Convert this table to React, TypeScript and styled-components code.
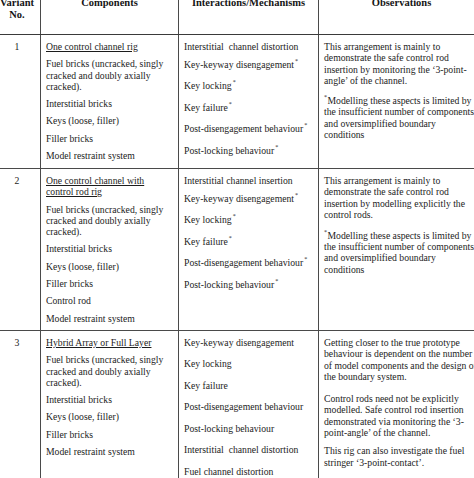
import styled, { createGlobalStyle } from "styled-components";

const GlobalStyle = createGlobalStyle`
  html, body {
    margin: 0;
    padding: 0;
    background: #ffffff;
    overflow: hidden;
  }
  body {
    font-family: "Liberation Serif", "Times New Roman", serif;
    color: #1c1c1c;
  }
`;

type RowData = {
  num: string;
  components: { text: string[]; underline?: boolean }[];
  interactions: { text: string; star?: boolean }[];
  tightFirst?: boolean;
  observations: { lines: string[]; star?: boolean; gap: number }[];
  height?: number;
};

const modelling = [
  "Modelling these aspects is limited by",
  "the insufficient number of components",
  "and oversimplified boundary",
  "conditions",
];

const rows: RowData[] = [
  {
    num: "1",
    height: 133,
    components: [
      { text: ["One control channel rig"], underline: true },
      { text: ["Fuel bricks (uncracked, singly", "cracked and doubly axially", "cracked)."] },
      { text: ["Interstitial bricks"] },
      { text: ["Keys (loose, filler)"] },
      { text: ["Filler bricks"] },
      { text: ["Model restraint system"] },
    ],
    tightFirst: true,
    interactions: [
      { text: "Interstitial\u00a0 channel distortion" },
      { text: "Key-keyway disengagement", star: true },
      { text: "Key locking", star: true },
      { text: "Key failure", star: true },
      { text: "Post-disengagement behaviour", star: true },
      { text: "Post-locking behaviour", star: true },
    ],
    observations: [
      {
        lines: [
          "This arrangement is mainly to",
          "demonstrate the safe control rod",
          "insertion by monitoring the \u20183-point-",
          "angle\u2019 of the channel.",
        ],
        gap: 9,
      },
      { lines: modelling, star: true, gap: 0 },
    ],
  },
  {
    num: "2",
    height: 161,
    components: [
      { text: ["One control channel with", "control rod rig"], underline: true },
      { text: ["Fuel bricks (uncracked, singly", "cracked and doubly axially", "cracked)."] },
      { text: ["Interstitial bricks"] },
      { text: ["Keys (loose, filler)"] },
      { text: ["Filler bricks"] },
      { text: ["Control rod"] },
      { text: ["Model restraint system"] },
    ],
    tightFirst: true,
    interactions: [
      { text: "Interstitial channel insertion" },
      { text: "Key-keyway disengagement", star: true },
      { text: "Key locking", star: true },
      { text: "Key failure", star: true },
      { text: "Post-disengagement behaviour", star: true },
      { text: "Post-locking behaviour", star: true },
    ],
    observations: [
      {
        lines: [
          "This arrangement is mainly to",
          "demonstrate the safe control rod",
          "insertion by modelling explicitly the",
          "control rods.",
        ],
        gap: 9.7,
      },
      { lines: modelling, star: true, gap: 0 },
    ],
  },
  {
    num: "3",
    components: [
      { text: ["Hybrid Array or Full Layer"], underline: true },
      { text: ["Fuel bricks (uncracked, singly", "cracked and doubly axially", "cracked)."] },
      { text: ["Interstitial bricks"] },
      { text: ["Keys (loose, filler)"] },
      { text: ["Filler bricks"] },
      { text: ["Model restraint system"] },
    ],
    interactions: [
      { text: "Key-keyway disengagement" },
      { text: "Key locking" },
      { text: "Key failure" },
      { text: "Post-disengagement behaviour" },
      { text: "Post-locking behaviour" },
      { text: "Interstitial\u00a0 channel distortion" },
      { text: "Fuel channel distortion" },
    ],
    observations: [
      {
        lines: [
          "Getting closer to the true prototype",
          "behaviour is dependent on the number",
          "of model components and the design of",
          "the boundary system.",
        ],
        gap: 11,
      },
      {
        lines: [
          "Control rods need not be explicitly",
          "modelled. Safe control rod insertion",
          "demonstrated via monitoring the \u20183-",
          "point-angle\u2019 of the channel.",
        ],
        gap: 7,
      },
      {
        lines: ["This rig can also investigate the fuel", "stringer \u20183-point-contact\u2019."],
        gap: 0,
      },
    ],
  },
];

export default function App() {
  return (
    <>
      <GlobalStyle />
      <Table>
        <HeaderRow>
          <HeadCell $first>
            Variant
            <br />
            No.
          </HeadCell>
          <HeadCell>Components</HeadCell>
          <HeadCell>Interactions/Mechanisms</HeadCell>
          <HeadCell $last>Observations</HeadCell>
        </HeaderRow>

        {rows.map((row) => (
          <BodyRow key={row.num} $height={row.height}>
            <NumCell>{row.num}</NumCell>

            <Cell>
              {row.components.map((c, i) => (
                <Para key={i} $underline={c.underline} $gap={6}>
                  {c.text.map((line, j) => (
                    <Line key={j}>{line}</Line>
                  ))}
                </Para>
              ))}
            </Cell>

            <Cell>
              {row.interactions.map((it, i) => (
                <Item key={i} $tight={row.tightFirst && i === 0}>
                  {it.text}
                  {it.star && <Star>*</Star>}
                </Item>
              ))}
            </Cell>

            <Cell $last>
              {row.observations.map((o, i) => (
                <Para key={i} $gap={o.gap}>
                  {o.lines.map((line, j) => (
                    <Line key={j}>
                      {o.star && j === 0 && <Star $lead>*</Star>}
                      {line}
                    </Line>
                  ))}
                </Para>
              ))}
            </Cell>
          </BodyRow>
        ))}
      </Table>
    </>
  );
}

const Table = styled.div`
  width: 484px;
  margin-top: -3px;
`;

const columns = "41px 138px 140px 165px";

const HeaderRow = styled.div`
  display: grid;
  grid-template-columns: ${columns};
  height: 37px;
  border-bottom: 1px solid #3a3a3a;
`;

const HeadCell = styled.div<{ $first?: boolean; $last?: boolean }>`
  border-right: ${(p) => (p.$last ? "none" : "1px solid #4a4a4a")};
  font-size: 10.5px;
  font-weight: bold;
  line-height: 12px;
  text-align: center;
  color: #151515;
  padding-right: ${(p) => (p.$first ? "6px" : "0")};
  white-space: nowrap;
`;

const BodyRow = styled.div<{ $height?: number }>`
  display: grid;
  grid-template-columns: ${columns};
  height: ${(p) => (p.$height ? `${p.$height}px` : "auto")};
  border-bottom: 1px solid #4a4a4a;
`;

const NumCell = styled.div`
  border-right: 1px solid #4a4a4a;
  padding: 6px 6px 0 0;
  text-align: center;
  font-size: 9.7px;
  line-height: 11.3px;
`;

const Cell = styled.div<{ $last?: boolean }>`
  border-right: ${(p) => (p.$last ? "none" : "1px solid #4a4a4a")};
  padding: 6px 0 0 5px;
  font-size: 9.7px;
  line-height: 11.3px;
  white-space: nowrap;
  overflow: hidden;
`;

const Para = styled.div<{ $underline?: boolean; $gap: number }>`
  margin-bottom: ${(p) => p.$gap}px;
  text-decoration: ${(p) => (p.$underline ? "underline" : "none")};
`;

const Line = styled.div``;

const Item = styled.div<{ $tight?: boolean }>`
  margin-bottom: ${(p) => (p.$tight ? "6.7px" : "10.2px")};
`;

const Star = styled.span<{ $lead?: boolean }>`
  display: inline-block;
  font-size: 6px;
  line-height: 0;
  vertical-align: top;
  position: relative;
  top: 2px;
  margin-left: ${(p) => (p.$lead ? "0" : "1px")};
  margin-right: ${(p) => (p.$lead ? "0.5px" : "0")};
`;
